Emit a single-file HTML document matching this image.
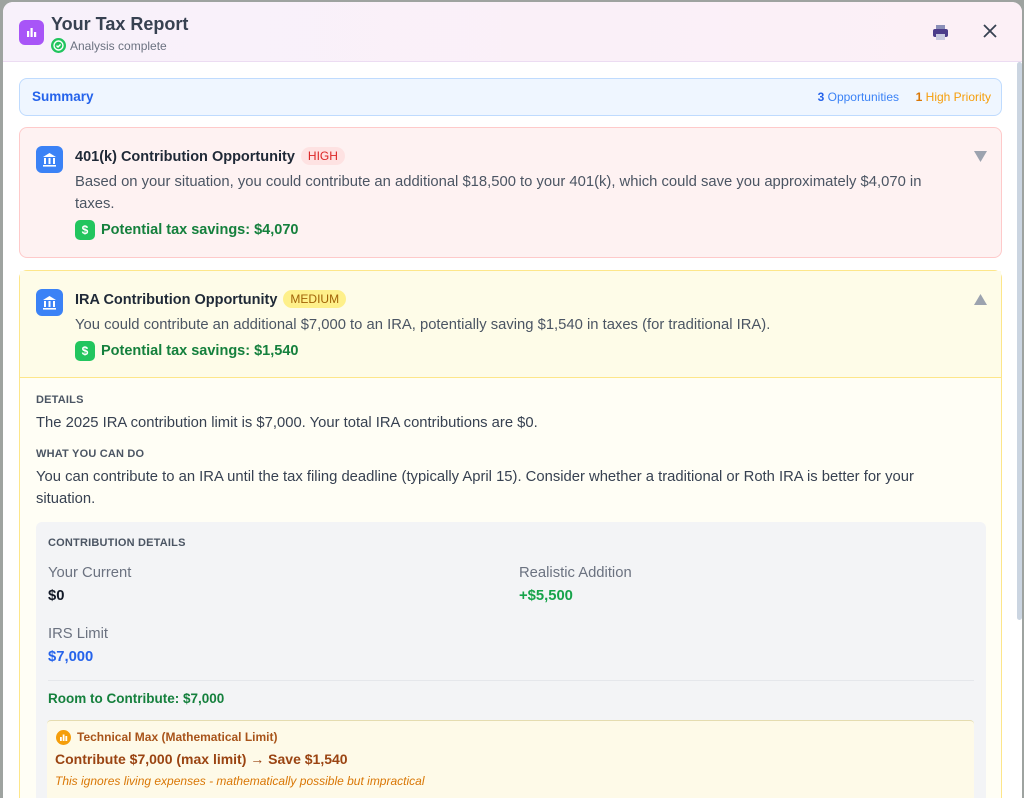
<!DOCTYPE html>
<html><head><meta charset="utf-8"><style>
*{box-sizing:border-box;margin:0;padding:0}
html,body{width:1024px;height:798px;overflow:hidden}
body{background:#9ea3a0;font-family:"Liberation Sans",sans-serif;position:relative}
.modal{position:absolute;left:3px;top:2px;width:1019px;height:796px;background:#fff;border-radius:10px 10px 0 0;overflow:hidden}
.hdr{height:60px;background:linear-gradient(90deg,#f8f1fb,#fcf0f6);border-bottom:1px solid #ecdcf2;position:relative}
.logo{position:absolute;left:16px;top:18px;width:25px;height:25px;background:#a855f7;border-radius:6px}
.title{position:absolute;left:48px;top:12px;font-size:18px;font-weight:bold;color:#374151}
.sub{position:absolute;left:48px;top:36px;font-size:12px;color:#6b7280;display:flex;align-items:center;gap:4px}
.chk{width:15px;height:15px;border-radius:50%;background:#22c55e;display:inline-block;position:relative}
.box{position:absolute;left:16px;width:983px;border-radius:8px}
.sum{top:76px;height:38px;background:#eff6ff;border:1px solid #bfdbfe;font-size:13px}
.card1{top:125px;height:131px;background:#fef2f2;border:1px solid #fecaca}
.card2{top:268px;height:600px;background:#fffef5;border:1px solid #fde68a}
.ic{position:absolute;left:16px;width:27px;height:27px;background:#3b82f6;border-radius:6px}
.ct{position:absolute;left:55px;font-size:14.5px;font-weight:bold;color:#1f2937}
.badge{display:inline-block;font-weight:normal;font-size:12px;padding:2px 7px;border-radius:9px;margin-left:6px;vertical-align:1px}
.txt{position:absolute;left:55px;font-size:14.8px;color:#4b5563;line-height:22px;width:885px}
.sav{position:absolute;left:55px;font-size:14.5px;font-weight:bold;color:#15803d;display:flex;align-items:center;gap:6px}
.dol{width:20px;height:20px;border-radius:5px;background:#22c55e;color:#fff;font-size:12px;display:inline-flex;align-items:center;justify-content:center}
.lab{position:absolute;font-size:11px;font-weight:bold;color:#4b5563;letter-spacing:.2px}
.p{position:absolute;font-size:14.8px;color:#374151;line-height:22px}
</style></head><body>
<div class="modal">
 <div class="hdr">
  <div class="logo"><svg width="25" height="25"><rect x="8" y="11" width="2.2" height="6" fill="#fff"/><rect x="11.5" y="8" width="2.2" height="9" fill="#fff"/><rect x="15" y="12" width="2.2" height="5" fill="#fff"/></svg></div>
  <div class="title">Your Tax Report</div>
  <div class="sub"><span class="chk"><svg width="15" height="15" style="position:absolute;left:0;top:0"><circle cx="7.5" cy="7.5" r="4.5" fill="none" stroke="#fff" stroke-width="1.4"/><path d="M5.5 7.6l1.5 1.4 2.6-2.6" fill="none" stroke="#fff" stroke-width="1.4"/></svg></span>Analysis complete</div>
  <svg style="position:absolute;left:929px;top:22px" width="17" height="17"><rect x="4" y="1" width="9" height="5" fill="#8b8fb8"/><rect x="1" y="5" width="15" height="8" rx="2" fill="#4c3d8a"/><rect x="4" y="10" width="9" height="6" fill="#c9cbe0"/></svg>
  <svg style="position:absolute;left:980px;top:22px" width="14" height="14"><path d="M1 1L13 13M13 1L1 13" stroke="#374151" stroke-width="1.8"/></svg>
 </div>
 <div class="box sum"><span style="position:absolute;left:12px;top:10px;color:#2563eb;font-weight:bold;font-size:13.5px">Summary</span>
  <span style="position:absolute;right:102px;top:11px;color:#3b82f6;font-size:12px"><b style="color:#2563eb">3</b> Opportunities</span>
  <span style="position:absolute;right:10px;top:11px;color:#f59e0b;font-size:12px"><b style="color:#d97706">1</b> High Priority</span></div>
 <div class="box card1">
  <div class="ic" style="top:18px"><svg width="27" height="27"><path d="M7 11L13.5 7 20 11Z" fill="#fff"/><rect x="8" y="12" width="2" height="6" fill="#fff"/><rect x="12.5" y="12" width="2" height="6" fill="#fff"/><rect x="17" y="12" width="2" height="6" fill="#fff"/><rect x="7" y="19" width="13" height="1.6" fill="#fff"/></svg></div>
  <div class="ct" style="top:19px">401(k) Contribution Opportunity<span class="badge" style="background:#fee2e2;color:#dc2626">HIGH</span></div>
  <div class="txt" style="top:43px">Based on your situation, you could contribute an additional $18,500 to your 401(k), which could save you approximately $4,070 in taxes.</div>
  <div class="sav" style="top:92px"><span class="dol">$</span>Potential tax savings: $4,070</div>
  <svg style="position:absolute;right:14px;top:23px" width="13" height="11"><path d="M0 0H13L6.5 11Z" fill="#9ca3af"/></svg>
 </div>
 <div class="box card2">
  <div style="position:absolute;left:0;top:0;width:100%;height:107px;background:#fefce8;border-bottom:1px solid #fde68a"></div>
  <div class="ic" style="top:18px"><svg width="27" height="27"><path d="M7 11L13.5 7 20 11Z" fill="#fff"/><rect x="8" y="12" width="2" height="6" fill="#fff"/><rect x="12.5" y="12" width="2" height="6" fill="#fff"/><rect x="17" y="12" width="2" height="6" fill="#fff"/><rect x="7" y="19" width="13" height="1.6" fill="#fff"/></svg></div>
  <div class="ct" style="top:19px">IRA Contribution Opportunity<span class="badge" style="background:#fef08a;color:#a16207">MEDIUM</span></div>
  <div class="txt" style="top:43px">You could contribute an additional $7,000 to an IRA, potentially saving $1,540 in taxes (for traditional IRA).</div>
  <div class="sav" style="top:70px"><span class="dol">$</span>Potential tax savings: $1,540</div>
  <svg style="position:absolute;right:14px;top:23px" width="13" height="11"><path d="M0 11H13L6.5 0Z" fill="#9ca3af"/></svg>
  <div class="lab" style="left:16px;top:123px">DETAILS</div>
  <div class="p" style="left:16px;top:141px">The 2025 IRA contribution limit is $7,000. Your total IRA contributions are $0.</div>
  <div class="lab" style="left:16px;top:177px">WHAT YOU CAN DO</div>
  <div class="p" style="left:16px;top:195px;width:920px">You can contribute to an IRA until the tax filing deadline (typically April 15). Consider whether a traditional or Roth IRA is better for your situation.</div>
  <div style="position:absolute;left:16px;top:251px;width:950px;height:400px;background:#f3f4f6;border-radius:6px">
   <div class="lab" style="left:12px;top:15px">CONTRIBUTION DETAILS</div>
   <div class="p" style="left:12px;top:40px;color:#6b7280">Your Current</div>
   <div class="p" style="left:12px;top:63px;font-weight:bold;color:#111827">$0</div>
   <div class="p" style="left:483px;top:40px;color:#6b7280">Realistic Addition</div>
   <div class="p" style="left:483px;top:63px;font-weight:bold;color:#16a34a">+$5,500</div>
   <div class="p" style="left:12px;top:101px;color:#6b7280">IRS Limit</div>
   <div class="p" style="left:12px;top:124px;font-weight:bold;color:#2563eb">$7,000</div>
   <div style="position:absolute;left:12px;top:158px;width:926px;border-top:1px solid #e5e7eb"></div>
   <div class="p" style="left:12px;top:166px;font-weight:bold;color:#15803d;font-size:13.5px">Room to Contribute: $7,000</div>
   <div style="position:absolute;left:11px;top:198px;width:927px;height:100px;background:#fefae8;border-top:1px solid #e5dcb0;border-radius:4px">
    <span style="position:absolute;left:9px;top:9px;width:15px;height:15px;border-radius:50%;background:#f59e0b"><svg width="15" height="15"><rect x="4" y="7" width="1.8" height="4" fill="#fff"/><rect x="6.7" y="4.5" width="1.8" height="6.5" fill="#fff"/><rect x="9.4" y="6" width="1.8" height="5" fill="#fff"/></svg></span>
    <div class="p" style="left:30px;top:5px;font-size:12px;font-weight:bold;color:#a8541a">Technical Max (Mathematical Limit)</div>
    <div class="p" style="left:8px;top:27px;font-size:14px;font-weight:bold;color:#9a4412">Contribute $7,000 (max limit) → Save $1,540</div>
    <div class="p" style="left:8px;top:49px;font-size:12px;font-style:italic;color:#d97706">This ignores living expenses - mathematically possible but impractical</div>
   </div>
  </div>
 </div>
 <div style="position:absolute;right:0;top:60px;width:5px;height:558px;background:#cbd5e1;border-radius:3px"></div>
</div>
</body></html>
